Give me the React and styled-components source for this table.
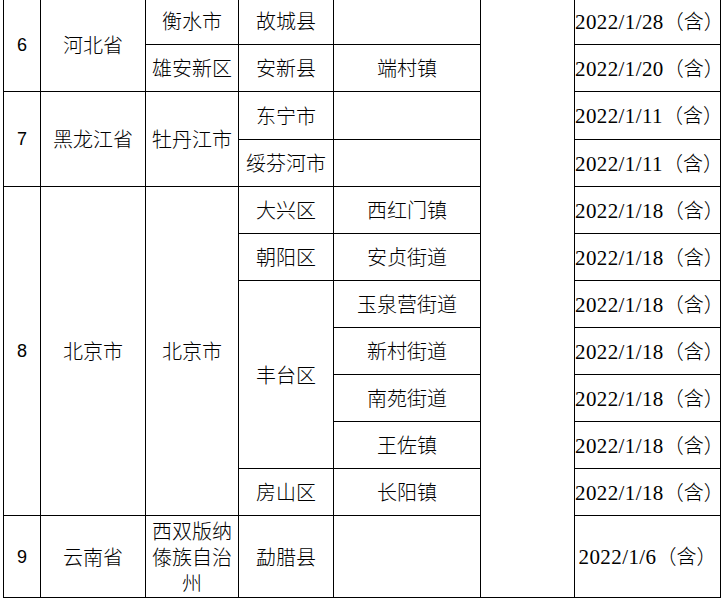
import React from 'react';
import styled, { createGlobalStyle } from 'styled-components';

const GlobalStyle = createGlobalStyle`
  html, body { margin: 0; padding: 0; background: #ffffff; }
  body { overflow: hidden; }
`;

const Page = styled.div`
  width: 723px;
  height: 603px;
  overflow: hidden;
  padding-left: 3px;
  box-sizing: border-box;
`;

const Table = styled.table`
  border-collapse: collapse;
  table-layout: fixed;
  width: 718px;
  margin-top: -3px;
  color: #000;
  font-family: "Noto Sans CJK SC", sans-serif;
  font-size: 20px;
  font-weight: 300;
`;

const Row = styled.tr`
  height: ${(p) => p.$h || 47}px;
`;

const Cell = styled.td`
  border: 1px solid #000;
  padding: 0;
  text-align: center;
  vertical-align: middle;
  line-height: 26px;
  white-space: ${(p) => (p.$wrap ? 'normal' : 'nowrap')};
`;

const NumCell = styled(Cell)`
  font-family: "Liberation Sans", Arial, sans-serif;
  font-size: 18px;
  font-weight: 400;
`;

const DateCell = styled(Cell)`
  font-family: "Liberation Serif", "Noto Sans CJK SC", serif;
  font-size: 21px;
  font-weight: 400;
  overflow: visible;
`;

const Latin = styled.span`
  letter-spacing: 0.4px;
`;

const Paren = styled.span`
  font-family: "Noto Sans CJK SC", sans-serif;
  font-size: 20px;
  font-weight: 300;
`;

const Date = ({ d }) => (
  <DateCell>
    <Latin>{d}</Latin>
    <Paren>（含）</Paren>
  </DateCell>
);

export default function App() {
  return (
    <Page>
      <GlobalStyle />
      <Table>
        <colgroup>
          <col style={{ width: 37 }} />
          <col style={{ width: 105 }} />
          <col style={{ width: 93 }} />
          <col style={{ width: 95 }} />
          <col style={{ width: 147 }} />
          <col style={{ width: 94 }} />
          <col style={{ width: 146 }} />
        </colgroup>
        <tbody>
          <Row $h={47}>
            <NumCell rowSpan={2}>6</NumCell>
            <Cell rowSpan={2}>河北省</Cell>
            <Cell>衡水市</Cell>
            <Cell>故城县</Cell>
            <Cell></Cell>
            <Cell rowSpan={12}></Cell>
            <Date d="2022/1/28" />
          </Row>
          <Row $h={47}>
            <Cell>雄安新区</Cell>
            <Cell>安新县</Cell>
            <Cell>端村镇</Cell>
            <Date d="2022/1/20" />
          </Row>
          <Row $h={48}>
            <NumCell rowSpan={2}>7</NumCell>
            <Cell rowSpan={2}>黑龙江省</Cell>
            <Cell rowSpan={2}>牡丹江市</Cell>
            <Cell>东宁市</Cell>
            <Cell></Cell>
            <Date d="2022/1/11" />
          </Row>
          <Row $h={47}>
            <Cell>绥芬河市</Cell>
            <Cell></Cell>
            <Date d="2022/1/11" />
          </Row>
          <Row>
            <NumCell rowSpan={7}>8</NumCell>
            <Cell rowSpan={7}>北京市</Cell>
            <Cell rowSpan={7}>北京市</Cell>
            <Cell>大兴区</Cell>
            <Cell>西红门镇</Cell>
            <Date d="2022/1/18" />
          </Row>
          <Row>
            <Cell>朝阳区</Cell>
            <Cell>安贞街道</Cell>
            <Date d="2022/1/18" />
          </Row>
          <Row>
            <Cell rowSpan={4}>丰台区</Cell>
            <Cell>玉泉营街道</Cell>
            <Date d="2022/1/18" />
          </Row>
          <Row>
            <Cell>新村街道</Cell>
            <Date d="2022/1/18" />
          </Row>
          <Row>
            <Cell>南苑街道</Cell>
            <Date d="2022/1/18" />
          </Row>
          <Row>
            <Cell>王佐镇</Cell>
            <Date d="2022/1/18" />
          </Row>
          <Row>
            <Cell>房山区</Cell>
            <Cell>长阳镇</Cell>
            <Date d="2022/1/18" />
          </Row>
          <Row $h={82}>
            <NumCell>9</NumCell>
            <Cell>云南省</Cell>
            <Cell $wrap>西双版纳傣族自治州</Cell>
            <Cell>勐腊县</Cell>
            <Cell></Cell>
            <Date d="2022/1/6" />
          </Row>
        </tbody>
      </Table>
    </Page>
  );
}
